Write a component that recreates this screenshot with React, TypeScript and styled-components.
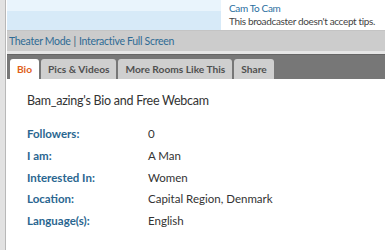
import styled, { createGlobalStyle } from "styled-components";

const GlobalStyle = createGlobalStyle`
  html, body {
    margin: 0;
    padding: 0;
    background: #ffffff;
    overflow: hidden;
  }
  body {
    font-family: Lato, "Liberation Sans", sans-serif;
    font-size: 11.5px;
  }
`;

const details = [
  { label: "Followers:", value: "0" },
  { label: "I am:", value: "A Man" },
  { label: "Interested In:", value: "Women" },
  { label: "Location:", value: "Capital Region, Denmark" },
  { label: "Language(s):", value: "English" },
];

const tabs = ["Bio", "Pics & Videos", "More Rooms Like This", "Share"];

function App() {
  return (
    <>
      <GlobalStyle />
      <Page>
        <Frame>
          <TopRow>
            <VideoArea>
              <VideoTop />
              <VideoBottom />
            </VideoArea>
            <TipPanel>
              <TipLink>Get More Tokens</TipLink>
              <TipLink>Cam To Cam</TipLink>
              <TipNote>This broadcaster doesn't accept tips.</TipNote>
            </TipPanel>
          </TopRow>
          <ModeBar>
            <ModeLink>Theater Mode</ModeLink>
            <Divider>|</Divider>
            <ModeLink>Interactive Full Screen</ModeLink>
          </ModeBar>
          <Spacer />
          <TabBar>
            {tabs.map((tab, i) => (
              <Tab key={tab} $active={i === 0}>
                {tab}
              </Tab>
            ))}
          </TabBar>
          <Content>
            <Heading>Bam_azing's Bio and Free Webcam</Heading>
            <DetailList>
              {details.map((d) => (
                <DetailRow key={d.label}>
                  <Label>{d.label}</Label>
                  <Value>{d.value}</Value>
                </DetailRow>
              ))}
            </DetailList>
          </Content>
        </Frame>
      </Page>
    </>
  );
}

const Page = styled.div`
  width: 385px;
  height: 250px;
  background: #e2e2e2;
  padding-left: 5px;
  box-sizing: border-box;
  overflow: hidden;
`;

const Frame = styled.div`
  height: 100%;
  border-left: 1px solid #b8b8b8;
  padding-left: 1px;
  background: #ffffff;
  display: flex;
  flex-direction: column;
`;

const TopRow = styled.div`
  display: flex;
  height: 30px;
  flex-shrink: 0;
  border-bottom: 1px solid #c4c4c4;
  overflow: hidden;
`;

const VideoArea = styled.div`
  width: 214px;
  flex-shrink: 0;
  display: flex;
  flex-direction: column;
`;

const VideoTop = styled.div`
  height: 11px;
  background: #e9f4fc;
`;

const VideoBottom = styled.div`
  flex: 1;
  background: #d7eaf8;
`;

const TipPanel = styled.div`
  flex: 1;
  min-width: 0;
  background: #ffffff;
  padding-left: 8px;
  display: flex;
  flex-direction: column;
  justify-content: flex-end;
  font-size: 10px;
  letter-spacing: -0.35px;
  line-height: 13px;
  padding-bottom: 2px;
  white-space: nowrap;
`;

const TipLink = styled.div`
  color: #2a6fa0;
`;

const TipNote = styled.div`
  color: #444444;
`;

const ModeBar = styled.div`
  height: 20px;
  flex-shrink: 0;
  background: #cccccc;
  display: flex;
  align-items: center;
  padding-left: 2px;
  gap: 3px;
  font-size: 10.5px;
  letter-spacing: -0.3px;
  white-space: nowrap;
`;

const ModeLink = styled.span`
  color: #2f6b94;
`;

const Divider = styled.span`
  color: #3a5c78;
`;

const Spacer = styled.div`
  height: 3px;
  flex-shrink: 0;
  background: #e6e6e6;
`;

const TabBar = styled.div`
  height: 25px;
  flex-shrink: 0;
  background: #777777;
  border-top: 1px solid #666666;
  box-sizing: border-box;
  display: flex;
  align-items: flex-end;
  padding-left: 3px;
  gap: 2px;
`;

const Tab = styled.div<{ $active?: boolean }>`
  height: 20px;
  padding: 0 7px;
  display: flex;
  align-items: center;
  border-radius: 3px 3px 0 0;
  background: ${(p) => (p.$active ? "#ffffff" : "#cfcfcf")};
  color: ${(p) => (p.$active ? "#e0601a" : "#4f4f4f")};
  font-size: 10.2px;
  font-weight: 700;
  white-space: nowrap;
`;

const Content = styled.div`
  flex: 1;
  background: #ffffff;
  padding: 14px 0 0 20px;
`;

const Heading = styled.div`
  font-size: 12.5px;
  letter-spacing: -0.25px;
  color: #333333;
  margin-bottom: 15px;
`;

const DetailList = styled.div`
  display: flex;
  flex-direction: column;
`;

const DetailRow = styled.div`
  display: flex;
  height: 21.7px;
  align-items: center;
`;

const Label = styled.div`
  width: 121px;
  color: #2a6690;
  font-weight: 700;
`;

const Value = styled.div`
  color: #333333;
`;

export default App;
